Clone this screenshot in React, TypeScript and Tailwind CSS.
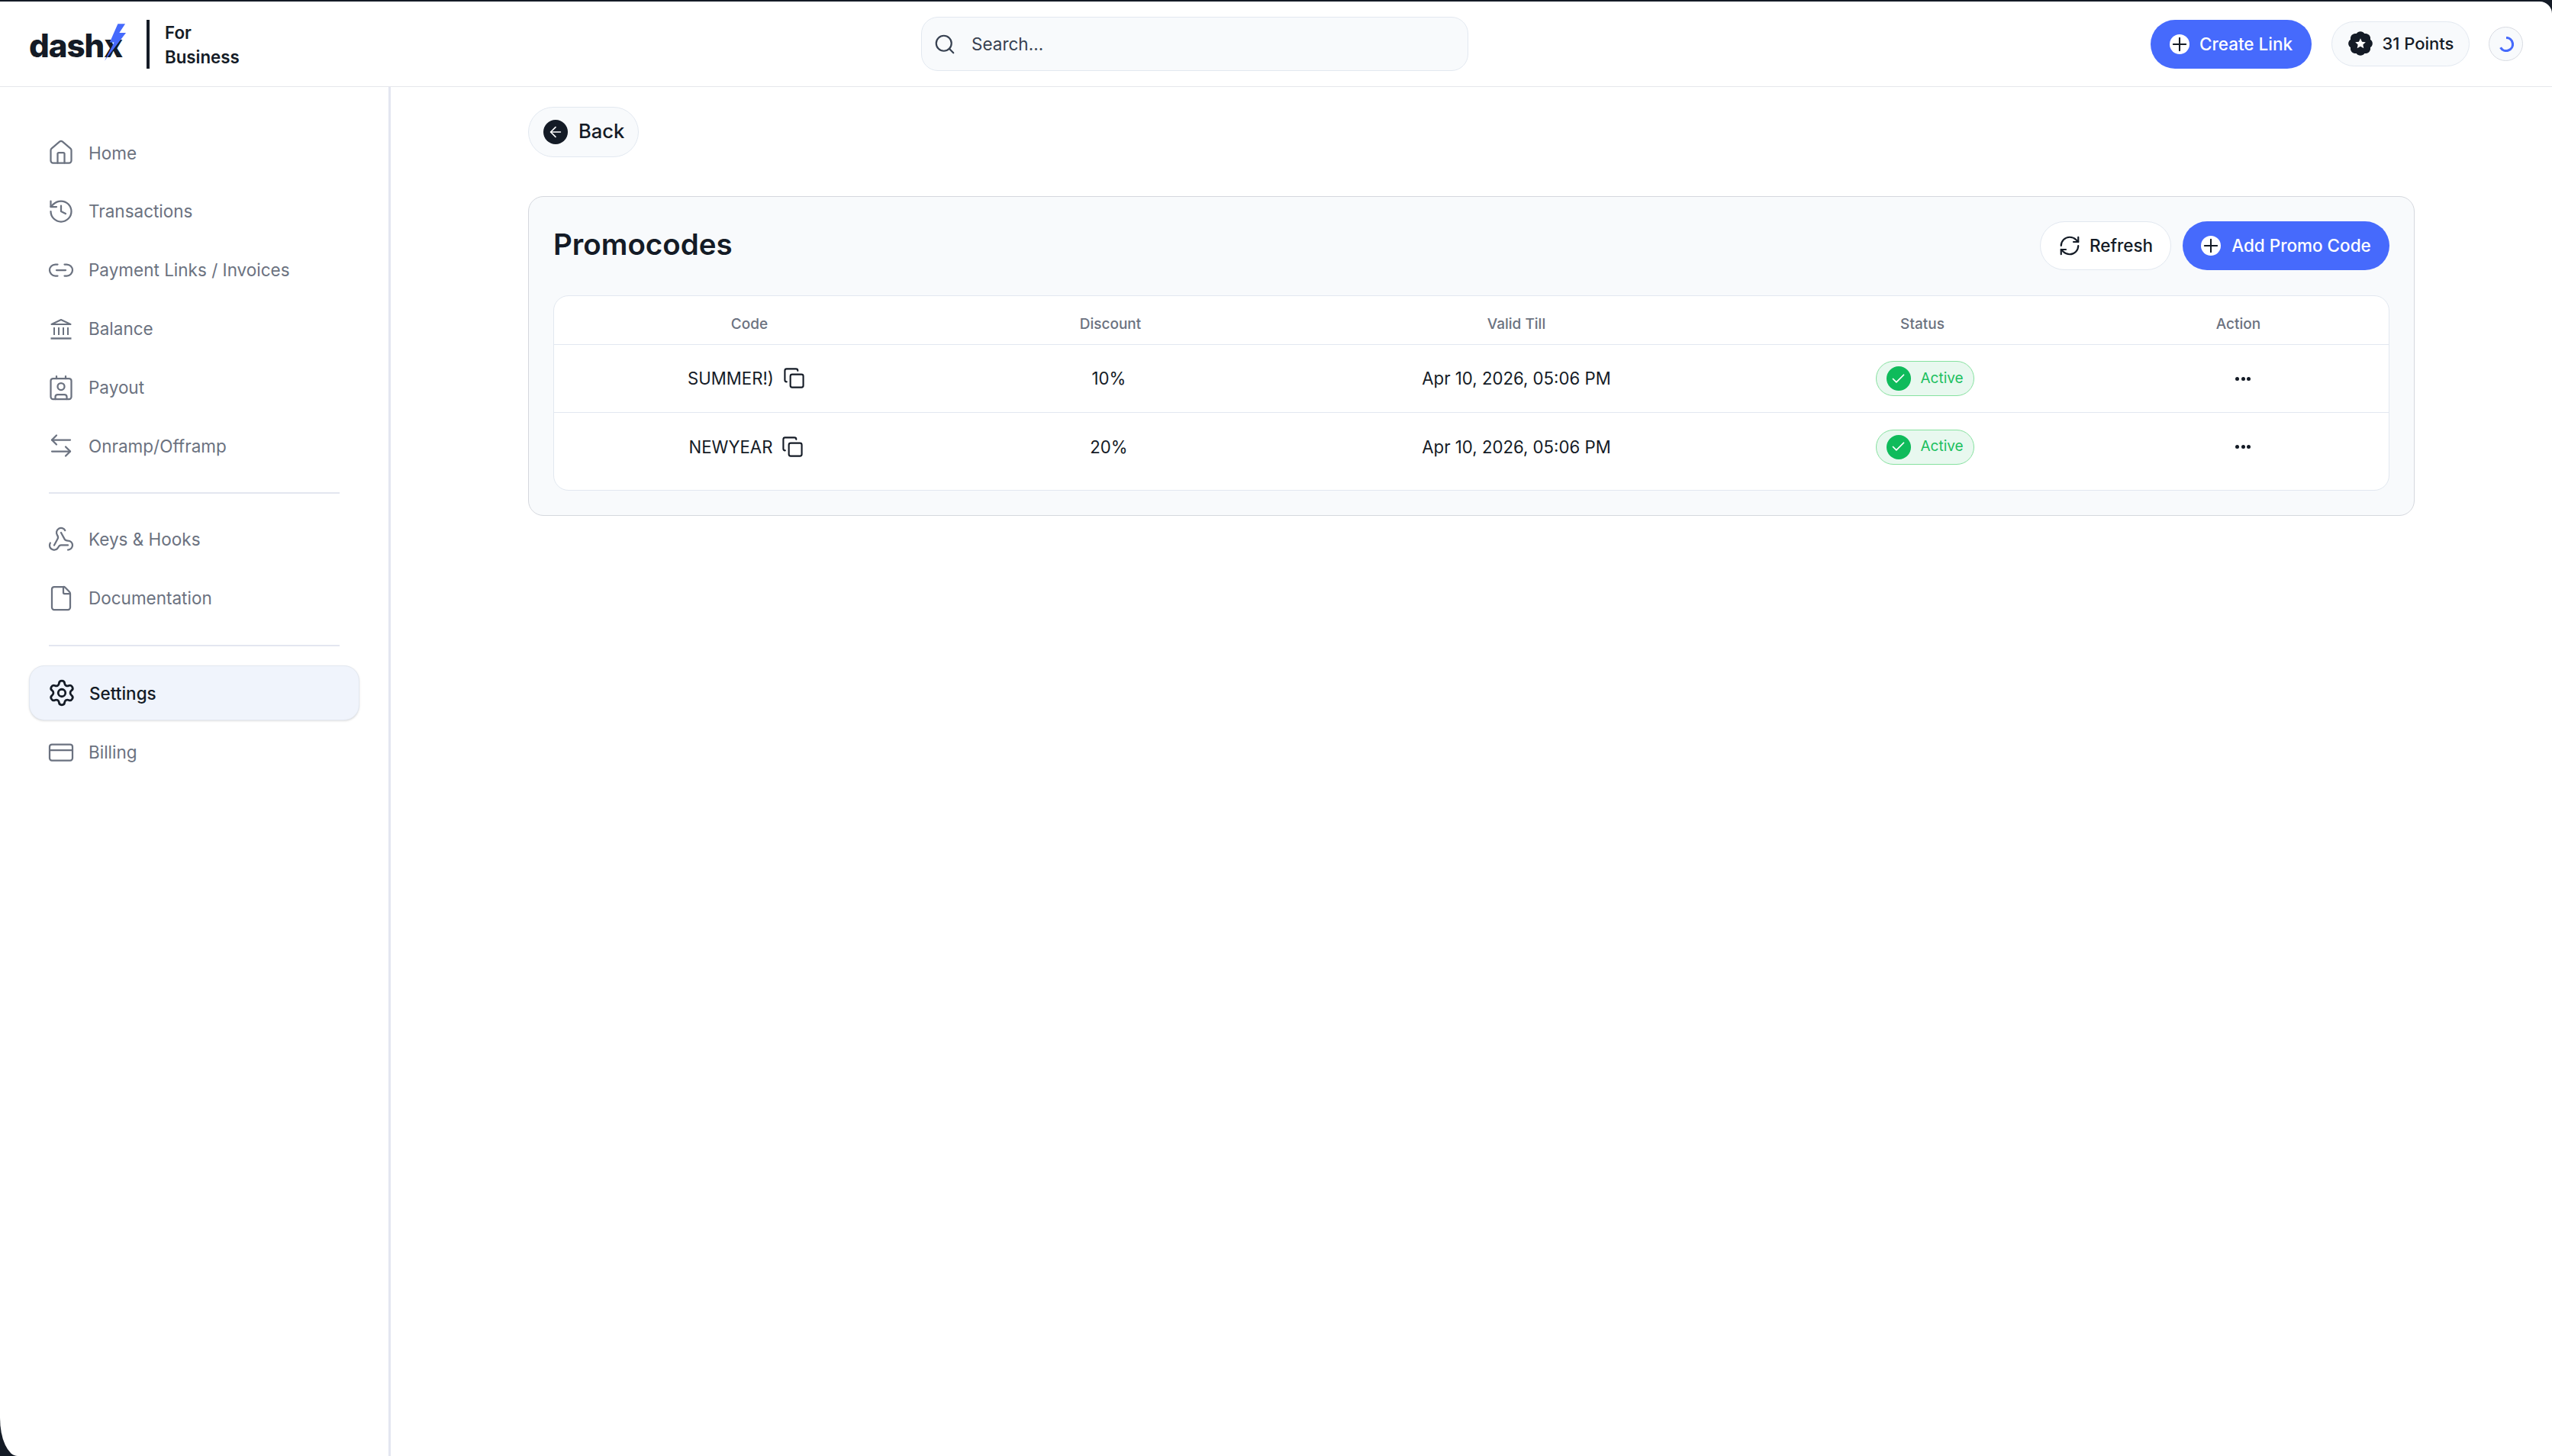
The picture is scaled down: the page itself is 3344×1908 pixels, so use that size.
import { ArrowLeft, ArrowLeftRight, Check, Contact, Copy, CreditCard, File, History, House, Link2, Plus, RefreshCw, Search, Settings, Webhook } from "lucide-react";

function BankIcon({ className }: { className?: string }) {
  return (
    <svg viewBox="-4 -4 36 36" aria-hidden className={className} fill="none" stroke="currentColor" strokeWidth="2">
      <path d="M1.5 8 14 2l12.5 6Z" strokeLinejoin="round" />
      <path d="M5 12v10M11 12v10M17 12v10M23 12v10" />
      <path d="M0.5 26.5h27" strokeWidth="2.4" />
    </svg>
  );
}

function PointsBadge() {
  return (
    <svg viewBox="0 0 24 24" aria-hidden className="h-[38px] w-[38px] shrink-0">
      <path
        d="M3.85 8.62a4 4 0 0 1 4.78-4.77 4 4 0 0 1 6.74 0 4 4 0 0 1 4.78 4.78 4 4 0 0 1 0 6.74 4 4 0 0 1-4.77 4.78 4 4 0 0 1-6.75 0 4 4 0 0 1-4.78-4.77 4 4 0 0 1 0-6.76Z"
        fill="#141b26"
      />
      <path d="m12 7.8 1.3 2.7 3 .4-2.2 2 .6 3-2.7-1.5-2.7 1.5.6-3-2.2-2 3-.4Z" fill="#fff" />
    </svg>
  );
}

function PlusDot() {
  return (
    <span className="flex h-[26px] w-[26px] shrink-0 items-center justify-center rounded-full bg-white text-[#141b26]">
      <Plus className="h-[28px] w-[28px] shrink-0" strokeWidth={1.75} />
    </span>
  );
}

function NavItem({ icon: Icon, label }: { icon: React.ElementType; label: string }) {
  return (
    <a className="mx-[28px] flex h-[76.8px] items-center gap-[18px] pl-[34px] text-[22.5px] text-[#6b7280]">
      <Icon className="h-[36px] w-[36px] shrink-0" strokeWidth={1.5} />
      {label}
    </a>
  );
}

const rows = [
  { code: "SUMMER!)", discount: "10%" },
  { code: "NEWYEAR", discount: "20%" },
];

const columns = "grid grid-cols-[512px_434px_630px_434px_394px] items-center text-center";

export default function App() {
  return (
    <div className="h-screen w-screen overflow-hidden bg-[#141b26] pt-[2px] font-[Inter,sans-serif]">
      <div className="flex h-full flex-col overflow-hidden rounded-tr-[16px] rounded-bl-[23px_50px] bg-white">
        <header className="flex h-[112px] shrink-0 items-center border-b border-[#e5e7eb]">
          <div className="flex w-[1207px] items-center pl-[38px]">
            <div className="relative mt-[4px] w-[120px]">
              <span className="block text-[42px] leading-none font-extrabold tracking-[-1px] text-[#141b26]">dashx</span>
              <svg viewBox="0 0 30 50" aria-hidden className="absolute top-[-8px] left-[99px] h-[49px] w-[29px]">
                <path d="M18 0h10l-8 12h9L0 50l13-25H7Z" fill="#466afc" />
              </svg>
            </div>
            <div className="mr-[20px] ml-[34px] h-[64px] w-[4px] bg-[#141b26]" />
            <div className="mt-[2px] text-[22.3px] leading-[32px] font-semibold text-[#141b26]">
              <div>For</div>
              <div>Business</div>
            </div>
          </div>
          <div className="flex h-[71px] w-[717px] items-center gap-[20px] rounded-[22px] border border-[#e2e8f0] bg-[#f8fafc] pl-[15px]">
            <Search className="h-[30px] w-[30px] text-[#374151]" strokeWidth={1.75} />
            <span className="text-[22.5px] text-[#374151]">Search...</span>
          </div>
          <div className="flex flex-1 items-center justify-end gap-[25px] pr-[38px]">
            <button className="mr-[1px] flex h-[64px] w-[211px] items-center justify-center gap-[13px] rounded-full bg-[#466afc] text-[22.5px] font-medium text-white">
              <PlusDot />
              Create Link
            </button>
            <div className="flex h-[59px] w-[181px] items-center justify-center gap-[10px] rounded-full border border-[#e2e8f0] bg-[#f8fafc] pr-[2px] pb-[1px] text-[22px] font-medium text-[#141b26]">
              <PointsBadge />
              31 Points
            </div>
            <div className="flex h-[45px] w-[45px] items-center justify-center rounded-full border border-[#d8dbe2] bg-[#f8fafc]">
              <svg viewBox="0 0 20 20" aria-hidden className="h-[20px] w-[20px]" fill="none">
                <path d="M10 1.5a8.5 8.5 0 1 1-7.4 12.7" stroke="#466afc" strokeWidth="3.2" />
              </svg>
            </div>
          </div>
        </header>

        <div className="flex min-h-0 flex-1">
          <aside className="w-[512px] shrink-0 border-r-[3px] border-[#e3e6f0] pt-[48px]">
            <NavItem icon={House} label="Home" />
            <NavItem icon={History} label="Transactions" />
            <NavItem icon={Link2} label="Payment Links / Invoices" />
            <NavItem icon={BankIcon} label="Balance" />
            <NavItem icon={Contact} label="Payout" />
            <NavItem icon={ArrowLeftRight} label="Onramp/Offramp" />
            <div className="my-[22px] ml-[64px] h-[2px] w-[381px] bg-[#e3e6f0]" />
            <NavItem icon={Webhook} label="Keys & Hooks" />
            <NavItem icon={File} label="Documentation" />
            <div className="mt-[23px] mb-[25px] ml-[64px] h-[2px] w-[381px] bg-[#e3e6f0]" />
            <a className="ml-[38px] flex h-[72px] w-[433px] items-center gap-[17px] rounded-[20px] border border-[#e3e8f0] bg-[#f0f4fc] pl-[23px] text-[22.5px] font-medium text-[#141b26] shadow-sm">
              <Settings className="h-[38px] w-[38px] shrink-0" strokeWidth={1.75} />
              Settings
            </a>
            <div className="pt-[3px]">
              <NavItem icon={CreditCard} label="Billing" />
            </div>
          </aside>

          <main className="min-w-0 flex-1 pt-[26px] pr-[180px] pl-[180px]">
            <button className="flex h-[66px] w-[145px] items-center gap-[14px] rounded-full border border-[#e2e8f0] bg-[#f8fafc] pb-[1px] pl-[19px] text-[25.6px] font-medium text-[#141b26]">
              <span className="flex h-[32px] w-[32px] items-center justify-center rounded-full bg-[#141b26] text-white">
                <ArrowLeft className="h-[22px] w-[22px]" strokeWidth={1.75} />
              </span>
              Back
            </button>

            <section className="mt-[51px] h-[419px] rounded-[20px] border border-[#d5d8de] bg-[#f8fafc] p-[32px]">
              <div className="flex h-[64px] items-center justify-between">
                <h1 className="pb-[2px] text-[38.5px] font-semibold text-[#141b26]">Promocodes</h1>
                <div className="flex items-center gap-[15px]">
                  <button className="flex h-[64px] w-[172px] items-center justify-center gap-[11px] rounded-full border border-[#e2e8f0] bg-white text-[22.5px] font-medium text-[#141b26]">
                    <RefreshCw className="h-[30px] w-[30px]" strokeWidth={1.75} />
                    Refresh
                  </button>
                  <button className="flex h-[64px] w-[271px] items-center justify-center gap-[14px] rounded-full bg-[#466afc] text-[22.5px] font-medium text-white">
                    <PlusDot />
                    Add Promo Code
                  </button>
                </div>
              </div>

              <div className="mt-[33px] h-[256px] rounded-[20px] border border-[#e2e8f0] bg-white">
                <div className={`${columns} h-[64px] border-b border-[#e2e8f0] pt-[12px] text-[19px] font-medium text-[#6b7280]`}>
                  <div>Code</div>
                  <div>Discount</div>
                  <div>Valid Till</div>
                  <div>Status</div>
                  <div>Action</div>
                </div>
                {rows.map((row, i) => (
                  <div
                    key={row.code}
                    className={`${columns} h-[89px] text-[22.2px] text-[#141b26] ${i === 0 ? "border-b border-[#e2e8f0]" : ""}`}
                  >
                    <div className="flex items-center justify-center gap-[12px] pr-[8px]">
                      {row.code}
                      <Copy className="h-[29px] w-[29px]" strokeWidth={1.75} />
                    </div>
                    <div className="pr-[4px]">{row.discount}</div>
                    <div>Apr 10, 2026, 05:06 PM</div>
                    <div className="flex justify-center pl-[6px]">
                      <div className="flex h-[46px] w-[129px] items-center gap-[13px] rounded-full border border-[#86e19f] bg-[#e8f8ef] pl-[13px] text-[19px] text-[#1cc05f]">
                        <span className="flex h-[32px] w-[32px] items-center justify-center rounded-full bg-[#0fbb5b] text-white">
                          <Check className="h-[21px] w-[21px]" strokeWidth={2} />
                        </span>
                        Active
                      </div>
                    </div>
                    <div className="flex justify-center gap-[2.5px] pl-[12px]">
                      <span className="h-[5px] w-[5px] rounded-full bg-[#141b26]" />
                      <span className="h-[5px] w-[5px] rounded-full bg-[#141b26]" />
                      <span className="h-[5px] w-[5px] rounded-full bg-[#141b26]" />
                    </div>
                  </div>
                ))}
              </div>
            </section>
          </main>
        </div>
      </div>
    </div>
  );
}
